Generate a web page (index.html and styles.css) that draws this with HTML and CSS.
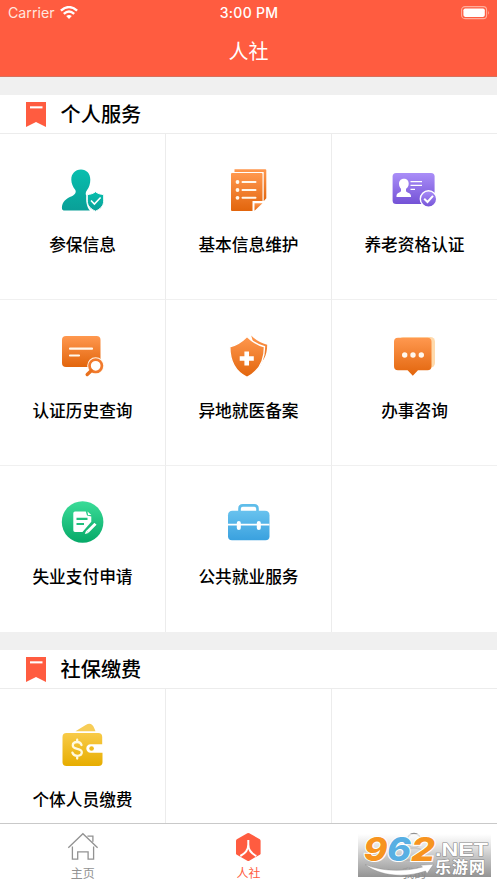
FILE: index.html
```html
<!DOCTYPE html>
<html lang="zh-CN">
<head>
<meta charset="utf-8">
<title>人社</title>
<link rel="stylesheet" href="styles.css">
</head>
<body>
<svg class="defs" width="0" height="0" aria-hidden="true">
  <defs>
    <linearGradient id="teal" x2="0" y2="1"><stop stop-color="#08bfae"/><stop offset="1" stop-color="#0a9f97"/></linearGradient>
    <linearGradient id="orange" x2="0" y2="1"><stop stop-color="#ff984f"/><stop offset="1" stop-color="#e2650c"/></linearGradient>
    <linearGradient id="purple" x2="0" y2="1"><stop stop-color="#aa8ef8"/><stop offset="1" stop-color="#7452d6"/></linearGradient>
    <linearGradient id="green" x2="0" y2="1"><stop stop-color="#3bdc98"/><stop offset="1" stop-color="#06a968"/></linearGradient>
    <linearGradient id="blue" x2="0" y2="1"><stop stop-color="#68c2ee"/><stop offset="1" stop-color="#3aa1df"/></linearGradient>
    <linearGradient id="gold" x2="0" y2="1"><stop stop-color="#f8cb48"/><stop offset="1" stop-color="#e7ad00"/></linearGradient>
  </defs>
</svg>
<div class="app">
  <header class="top">
    <div class="status">
      <div class="carrier"><span>Carrier</span>
        <svg width="18" height="13" viewBox="0 0 18 13"><g fill="none" stroke="#fff" stroke-width="2.4"><path d="M.9 4.7Q9-2.5 17.1 4.7"/><path d="M3.8 7.9Q9 3.3 14.2 7.9"/></g><path fill="#fff" d="M6.2 10Q9 7.8 11.8 10L9 12.9z"/></svg>
      </div>
      <div class="time">3:00 PM</div>
      <svg class="battery" width="29" height="14" viewBox="0 0 29 14"><rect x=".6" y=".6" width="25" height="12" rx="3.4" fill="none" stroke="#ffad9c" stroke-width="1.1"/><rect x="2.4" y="2.4" width="21.4" height="8.5" rx="1.8" fill="#fff"/><path d="M27.2 4.5q1.6 2.1 0 4.2z" fill="#ffad9c"/></svg>
    </div>
    <h1>人社</h1>
  </header>

  <section>
    <h2><svg width="20" height="25" viewBox="0 0 20 25"><path fill="#ff5c40" d="M0 0h20v25l-10-5-10 5z"/><path fill="#fff" d="M4 4.3h12.5v2.1H4z"/></svg>个人服务</h2>
    <div class="grid">
      <div class="cell"><svg viewBox="52.5 160 60 60"><path fill="url(#teal)" d="M81 169.500c-6 0-9.700 4.300-9.700 10.200 0 4 1.700 7 3.700 9.800 2 3-.5 5.300-3.200 6.700-5.300 2.200-9.900 5.300-9.900 11.800 0 2 1.200 2.600 3 2.600h25c-3-3.500-4-8-3.600-15-1-1.500-.7-3.600.8-5.700 2.200-3 3.200-6.300 3.200-10.200 0-6-3.700-10.200-9.300-10.200z"/><path fill="url(#teal)" stroke="#fff" stroke-width="1" d="M95.500 191.700c2.400 1.900 5.200 2.600 8.200 2.900v6.300c0 4.900-3.500 8.200-8.200 10.300-4.700-2.100-8.200-5.400-8.200-10.300v-6.300c3-.3 5.800-1 8.200-2.900z"/><path fill="none" stroke="#fff" stroke-width="1.600" d="m91 200.500 3.400 3.500 6.200-6.500"/></svg><p>参保信息</p></div>
      <div class="cell"><svg viewBox="218.500 160 60 60"><path fill="url(#orange)" d="M234.500 169.300h30.800q1 0 1 1v28l-2.600 3V172h-29.200z"/><path fill="url(#orange)" d="M232 173h29.500q1 0 1 1v27h-10v10H232q-1 0-1-1v-36q0-1 1-1z"/><path fill="url(#orange)" d="M254.500 203.200h8l-8 7.500z"/><g stroke="#fff8ec" stroke-width="2" stroke-linecap="round"><path d="M242.500 182h13M242.500 190h13M242.500 197.800h13"/></g><g fill="#fff8ec"><circle cx="237.500" cy="182" r="1.900"/><circle cx="237.500" cy="190" r="1.900"/><circle cx="237.500" cy="197.800" r="1.900"/></g></svg><p>基本信息维护</p></div>
      <div class="cell"><svg viewBox="384.500 160 60 60"><rect x="392.600" y="173" width="42" height="31" rx="3.500" fill="url(#purple)"/><path fill="#fff" d="M404 178.700c-3.300 0-5 2.200-5 5 0 2.500 1 4 2 5.100v2.500c-1.500 1.700-4.500 1.500-4.500 4.900v.7h14.500v-.7c0-3.400-4-3.200-5-4.900v-2.500c1.500-1.200 2.700-2.600 2.700-5.100 0-2.800-1.400-5-4.700-5z"/><path stroke="#fff" stroke-width="1.300" d="M410.500 181.600h11.500M410.500 185.300h11.500M410.500 189.300h4.500"/><circle cx="428.500" cy="199" r="8.200" fill="url(#purple)" stroke="#fff" stroke-width="1.400"/><path fill="none" stroke="#fff" stroke-width="2" d="m424.200 198.800 3.300 3.200 5.500-6.200"/></svg><p>养老资格认证</p></div>

      <div class="cell"><svg viewBox="52.500 326 60 60"><rect x="62" y="336" width="38.500" height="31" rx="4" fill="url(#orange)"/><path stroke="#fff8ec" stroke-width="2.200" stroke-linecap="round" d="M70 348.700h22M70 355.500h9"/><path stroke="#fff" stroke-width="6.500" d="m92 369-7 7"/><circle cx="95.700" cy="365.800" r="8.500" fill="#fff8ec"/><circle cx="95.700" cy="365.800" r="6.200" fill="#fff" stroke="#f17a2d" stroke-width="2.700"/><path stroke="#e8701d" stroke-width="3.400" stroke-linecap="round" d="m91.200 370.700-4 3.800"/></svg><p>认证历史查询</p></div>
      <div class="cell"><svg viewBox="218.500 326 60 60"><path fill="url(#orange)" d="M251.200 335.500c4.500 4.300 9.300 7.700 16 9.200 0 11-4.200 17.700-11.200 22.600l-2-22z"/><path fill="url(#orange)" stroke="#fff" stroke-width="1.400" d="M247 336.400c5.300 5.300 10.700 8.800 17.500 10.300 0 16.300-6.600 25.300-17.500 30.600-10.900-5.300-17.200-14.300-17.200-30.600 6.800-1.500 12-5 17.200-10.300z"/><path stroke="#fff" stroke-width="4.600" d="M239.700 358.500h14.100M246.700 351.400v14.200"/></svg><p>异地就医备案</p></div>
      <div class="cell"><svg viewBox="384.500 326 60 60"><rect x="399" y="337" width="36" height="30.500" rx="4.500" fill="#ffdaac"/><path fill="url(#orange)" d="M398 337.800h29.500a4 4 0 0 1 4 4v24.500a4 4 0 0 1-4 4H418l-5.200 5.500-5.200-5.500H398a4 4 0 0 1-4-4v-24.500a4 4 0 0 1 4-4z"/><g fill="#fff8ee"><circle cx="404.700" cy="355" r="2.700"/><circle cx="413" cy="355" r="2.700"/><circle cx="421.300" cy="355" r="2.700"/></g></svg><p>办事咨询</p></div>

      <div class="cell"><svg viewBox="52.500 492 60 60"><circle cx="82.600" cy="522" r="20.800" fill="url(#green)"/><path fill="#fff" d="M75 511.400h10.800l1.200 4.100 4.300.9v5.300l-8.800 10.200H75q-1.700 0-1.700-1.700v-17q0-1.800 1.700-1.800z"/><path fill="#fff" d="m87.500 511.400 3.800 3.600h-3.200z"/><path stroke="#21bf7d" stroke-width="2.200" d="M76.500 518.900h11M76.500 524h7.500"/><path stroke="#17b775" stroke-width="5" stroke-linecap="round" d="m94 525-7.200 7"/><path stroke="#fff" stroke-width="3" d="m95.500 523.800-8 8"/><path fill="#fff" d="m86.200 530.600 2.300 2.300-3.700 1.200z"/></svg><p>失业支付申请</p></div>
      <div class="cell"><svg viewBox="218.500 492 60 60"><path fill="none" stroke="#5fbdea" stroke-width="2.600" d="M239.500 512v-3.300q0-3.300 3.300-3.300h11.400q3.300 0 3.300 3.300v3.300"/><path fill="url(#blue)" d="M232.500 510.700h32.500q4.500 0 4.500 4.500v21q0 4-4 4h-33.500q-4 0-4-4v-21q0-4.500 4.500-4.500z"/><path stroke="#fff" stroke-width="1.800" d="M228 524.700h41.500"/><path stroke="#fff" stroke-width="4" stroke-linecap="round" d="M238.800 523v5M258.800 523v5"/></svg><p>公共就业服务</p></div>
      <div class="cell"></div>
    </div>
  </section>

  <section>
    <h2><svg width="20" height="25" viewBox="0 0 20 25"><path fill="#ff5c40" d="M0 0h20v25l-10-5-10 5z"/><path fill="#fff" d="M4 4.300h12.500v2.100H4z"/></svg>社保缴费</h2>
    <div class="grid">
      <div class="cell"><svg viewBox="52.500 714.500 60 60"><path fill="#f7cd57" d="m75.500 730.700 10.600-6.400c4-2.200 6.600-.4 8.400 4l1 2.400z"/><path fill="url(#gold)" d="M66.500 732.600h31.700q4 0 4 4v7.200h-11.700a4.200 4.200 0 0 0 0 8.400h12v9.300q0 4-4 4h-32q-4 0-4-4v-25q0-3.900 4-3.900z"/><circle cx="91.600" cy="748" r="2.300" fill="#efba1f"/><path fill="none" stroke="#fff9df" stroke-width="2.300" stroke-linecap="round" d="M81.500 744.500c-.6-2-2-3-4.300-3-2.700 0-4.400 1.400-4.400 3.500 0 4.500 9 2.400 9 6.800 0 2.200-1.900 3.500-4.500 3.500-2.500 0-4.200-1-4.900-3.200M77.200 739.200v2.200M77.200 755.500v2.500"/></svg><p>个体人员缴费</p></div>
      <div class="cell"></div>
      <div class="cell"></div>
    </div>
  </section>

  <nav class="tabs">
    <div class="tab"><svg viewBox="0 0 32 30"><path fill="none" stroke="#929292" stroke-width="1.300" d="m1.300 15.700 14.600-14L30.600 15.700M5.400 14.500v12.700h5.300v-7.400h10.400v7.400h5.500V14.500M20.400 4.100h5.500v5.600"/></svg><span>主页</span></div>
    <div class="tab on"><svg viewBox="0 0 32 30"><path fill="#ff5c40" d="M15.300 1.200q1-.5 2 0l10.500 6q.8.500.8 1.500v12.500q0 1-.8 1.500l-10.500 6q-1 .5-2 0l-10.500-6q-.8-.5-.8-1.500V8.700q0-1 .8-1.500z"/><path fill="none" stroke="#fff" stroke-width="2" d="M16.300 8v4.500c0 5-3.200 9-8 11.500M16.300 12.500c0 5 3.200 9 8 11.500"/></svg><span>人社</span></div>
    <div class="tab"><svg viewBox="0 0 32 30"><circle cx="16" cy="8.500" r="7" fill="none" stroke="#929292" stroke-width="1.300"/><path fill="none" stroke="#929292" stroke-width="1.300" d="M4 28c0-8 5-12 12-12s12 4 12 12z"/></svg><span>我的</span></div>
  </nav>

  <svg class="mark" width="133" height="43" viewBox="0 0 133 43">
    <defs>
      <linearGradient id="shade" x2="0" y2="1"><stop stop-color="#fff" stop-opacity=".7"/><stop offset=".5" stop-color="#c0c0c0" stop-opacity=".85"/><stop offset="1" stop-color="#858585" stop-opacity=".88"/></linearGradient>
    </defs>
    <rect width="133" height="43" fill="url(#shade)"/>
    <g class="digits"><text x="5.500" y="27" textLength="24" lengthAdjust="spacingAndGlyphs" fill="#f79420">9</text><text x="29" y="27" textLength="24" lengthAdjust="spacingAndGlyphs" fill="#58afe3">6</text><text x="53" y="27" textLength="24" lengthAdjust="spacingAndGlyphs" fill="#f79420">2</text></g>
    <path fill="#fff" stroke="#888" stroke-width=".4" d="M7 30.500c17 7 39 7.500 57.500 2.500l-2-1.800 13-.9-6.500 9.200-1.500-2.500c-20 7-45 5.500-60.500-6.500z"/>
    <text class="net" x="77" y="21.500" textLength="53" lengthAdjust="spacingAndGlyphs">.NET</text>
    <text class="site" x="77" y="39" textLength="50">乐游网</text>
  </svg>
</div>
</body>
</html>
```

FILE: styles.css
```css
* { box-sizing: border-box; }
body { margin: 0; background: #fff; color: #000; font-family: "Noto Sans CJK SC", sans-serif; }
h1, h2, p { margin: 0; }
.defs { position: absolute; }
.app { position: relative; width: 497px; height: 883px; overflow: hidden; display: flex; flex-direction: column; background: #f0f0f0; }
.top { height: 77px; flex: none; background: #ff5c40; color: #fff; border-bottom: 1px solid #d8705c; }
.status { height: 26px; padding: 0 7px 0 8px; display: grid; grid-template-columns: 1fr auto 1fr; align-items: center; font: 14.2px/26px Inter, sans-serif; }
.carrier { display: flex; align-items: center; gap: 6px; color: #ffe6df; }
.carrier svg { margin-top: -2px; margin-left: -1px; }
.time { font-weight: 500; font-size: 14px; letter-spacing: .25px; }
.battery { justify-self: end; }
h1 { font-size: 20px; line-height: 30px; margin-top: 10px; font-weight: 400; text-align: center; }
section { flex: none; margin-top: 18px; background: #fff; }
h2 { height: 38px; padding-left: 26px; display: flex; align-items: center; gap: 14.5px; font-size: 20.2px; line-height: 30px; font-weight: 500; }
h2 svg { flex: none; }
.grid { display: grid; grid-template-columns: 166px 166px 165px; grid-auto-rows: 166px; border-top: 1px solid #ececec; }
.cell { border-right: 1px solid #ececec; border-bottom: 1px solid #f0f0f0; padding-top: 26px; display: flex; flex-direction: column; align-items: center; gap: 12px; }
.cell:nth-child(3n) { border-right: 0; }
.cell:nth-child(n + 7) { border-bottom: 0; }
.cell svg { width: 60px; height: 60px; flex: none; transform: translateX(-.5px); }
.cell p { font-size: 16.7px; line-height: 24px; font-weight: 500; white-space: nowrap; }
.tabs { position: absolute; left: 0; right: 0; bottom: 0; height: 60px; background: #fff; border-top: 1px solid #c9c9c9; display: grid; grid-template-columns: repeat(3, 1fr); }
.tab { display: flex; flex-direction: column; align-items: center; padding-top: 8px; color: #929292; font-size: 12px; line-height: 18px; gap: 2px; }
.tab svg { width: 32px; height: 30px; }
.tab.on { color: #ff5c40; }
.mark { position: absolute; left: 358px; top: 834px; }
.digits { font: italic 800 33px Inter, sans-serif; stroke: #fff; stroke-width: 2px; paint-order: stroke; }
.net { font: 700 19px "Liberation Sans", sans-serif; fill: #fff; stroke: #888; stroke-width: 1px; paint-order: stroke; }
.site { font: 700 16px "Noto Sans CJK SC", sans-serif; fill: #fff; stroke: #888; stroke-width: 1px; paint-order: stroke; }
```
